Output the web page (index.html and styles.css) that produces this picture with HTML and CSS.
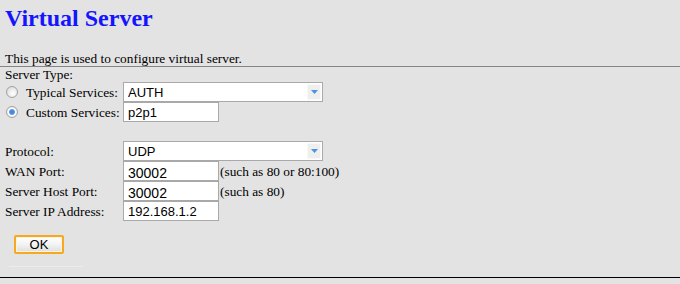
FILE: index.html
```html
<!DOCTYPE html>
<html lang="en">
  <head>
    <meta charset="UTF-8" />
    <title>Virtual Server</title>
    <link rel="stylesheet" href="styles.css">
  </head>

  <body>
    <h1 class="title">Virtual Server</h1>
    <p class="desc">This page is used to configure virtual server.</p>

    <form class="vs-form">
      <div class="section-label">Server Type:</div>

      <div class="row">
        <label class="radio-label">
          <input type="radio" name="svc" class="radio" />
          Typical Services:
        </label>
        <div class="select-box">
          <select class="select"><option>AUTH</option></select>
          <span class="select-arrow">
            <svg width="7" height="4" viewBox="0 0 7 4"><path d="M0 0H7L3.5 4Z" fill="#4b94e0" /></svg>
          </span>
        </div>
      </div>

      <div class="row">
        <label class="radio-label">
          <input type="radio" name="svc" class="radio" checked />
          Custom Services:
        </label>
        <input type="text" class="text-input" value="p2p1" />
      </div>

      <div class="row row-gap">
        <label class="field-label">Protocol:</label>
        <div class="select-box">
          <select class="select"><option>UDP</option></select>
          <span class="select-arrow">
            <svg width="7" height="4" viewBox="0 0 7 4"><path d="M0 0H7L3.5 4Z" fill="#4b94e0" /></svg>
          </span>
        </div>
      </div>

      <div class="row">
        <label class="field-label">WAN Port:</label>
        <input type="text" class="text-input port-input" value="30002" />
        <span class="hint">(such as 80 or 80:100)</span>
      </div>

      <div class="row">
        <label class="field-label">Server Host Port:</label>
        <input type="text" class="text-input port-input" value="30002" />
        <span class="hint">(such as 80)</span>
      </div>

      <div class="row">
        <label class="field-label">Server IP Address:</label>
        <input type="text" class="text-input" value="192.168.1.2" />
      </div>

      <div class="actions">
        <button type="button" class="ok-button">OK</button>
      </div>
      <div class="faint-line"></div>
    </form>

    <div class="bottom-rule"></div>
  </body>
</html>
```

FILE: styles.css
```css
body {
  margin: 0;
  padding: 0;
  background-color: #e3e3e3;
  font-family: "Liberation Serif", "Times New Roman", serif;
  font-size: 13.33px;
  color: #000;
}

.title {
  margin: 0;
  padding: 4px 0 0 5px;
  font-size: 24px;
  line-height: 28px;
  font-weight: bold;
  color: #1414ff;
}

.desc {
  margin: 19px 0 0;
  padding-left: 5px;
  line-height: 15px;
  border-bottom: 1px solid #858585;
}

.vs-form {
  margin: 0;
  padding-left: 5px;
}

.section-label {
  line-height: 15px;
}

.row {
  display: grid;
  grid-template-columns: 118px auto 1fr;
  align-items: center;
  height: 20px;
  line-height: 15px;
}

.row-gap {
  margin-top: 19px;
}

.radio-label {
  display: flex;
  align-items: center;
  white-space: nowrap;
}

.radio {
  appearance: none;
  width: 12px;
  height: 12px;
  margin: 0 8px 0 1px;
  border: 1px solid #a0a0a0;
  border-radius: 50%;
  background: radial-gradient(circle at 60% 65%, #ffffff 0%, #ececec 45%, #d2d2d2 100%);
}

.radio:checked {
  background: radial-gradient(circle, #3a79d6 0, #5d9ae8 2.5px, #ffffff 3.5px, #f2f2f2 4.5px, #d6d6d6 100%);
}

.select-box {
  position: relative;
  width: 200px;
  height: 20px;
  box-sizing: border-box;
  border: 1px solid #a9a9a9;
  background-color: #fff;
}

.select {
  appearance: none;
  width: 100%;
  height: 100%;
  margin: 0;
  padding: 0 0 0 4px;
  border: none;
  background: transparent;
  font-family: "Liberation Sans", Arial, sans-serif;
  font-size: 13px;
  color: #000;
}

.select-arrow {
  position: absolute;
  top: 1px;
  right: 1px;
  bottom: 1px;
  width: 14px;
  display: flex;
  align-items: center;
  justify-content: center;
  background-color: #efefef;
  border: 1px solid #f8f8f8;
  box-sizing: border-box;
}

.text-input {
  width: 96px;
  height: 20px;
  box-sizing: border-box;
  margin: 0;
  padding: 0 0 0 4px;
  border: 1px solid #a9a9a9;
  background-color: #fff;
  font-family: "Liberation Sans", Arial, sans-serif;
  font-size: 13px;
  color: #000;
}

.port-input {
  padding-top: 3px;
  font-size: 14px;
}

.hint {
  padding-left: 1px;
  white-space: nowrap;
}

.actions {
  margin-top: 14px;
  padding-left: 9px;
}

.ok-button {
  width: 50px;
  height: 19px;
  margin: 0;
  padding: 0;
  border: 2px solid #f7a823;
  border-radius: 2px;
  box-shadow: inset 0 0 0 1px #fff4da;
  background: linear-gradient(#ffffff, #f3f3f3 50%, #dedede);
  font-family: "Liberation Sans", Arial, sans-serif;
  font-size: 13px;
  line-height: 14px;
  color: #000;
}

.faint-line {
  width: 74px;
  margin: 12px 0 0 4px;
  border-top: 1px solid #ececec;
}

.bottom-rule {
  margin-top: 10px;
  border-top: 1px solid #000;
}
```
